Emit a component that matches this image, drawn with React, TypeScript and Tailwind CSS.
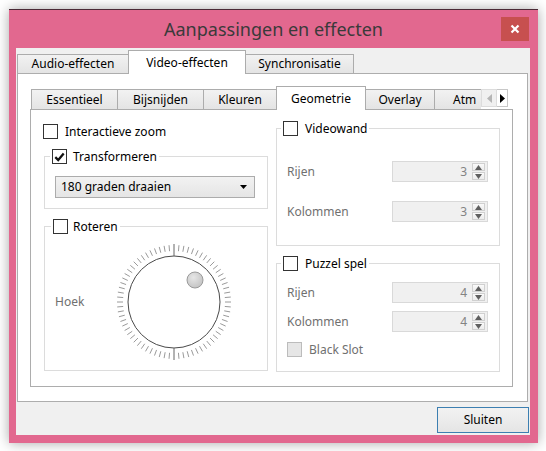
import React from 'react';

const Check = ({ checked = false, disabled = false }: { checked?: boolean; disabled?: boolean }) => (
  <span
    className={`flex h-[15px] w-[15px] shrink-0 items-center justify-center border ${
      disabled ? 'border-[#bcbcbc] bg-[#e6e6e6]' : 'border-[#333333] bg-white'
    }`}
  >
    {checked && (
      <svg width="11" height="10" viewBox="0 0 11 10">
        <path d="M1.3 5.2 L4.2 8 L9.7 1.6" fill="none" stroke="#111" strokeWidth="2.3" />
      </svg>
    )}
  </span>
);

const Spin = ({ value }: { value: number }) => (
  <div className="flex h-[21px] w-[96px] items-center justify-end border border-[#d9d9d9] bg-[#f0f0f0] pr-[2px]">
    <span className="mr-[5px] text-[#838383]">{value}</span>
    <div className="flex flex-col gap-px">
      <span className="flex h-[8px] w-[13px] items-center justify-center border border-[#d0d0d0] bg-gradient-to-b from-[#fafafa] to-[#ececec]">
        <svg width="7" height="5" viewBox="0 0 7 5">
          <path d="M0 5 L3.5 0 L7 5Z" fill="#5f5f5f" />
        </svg>
      </span>
      <span className="flex h-[8px] w-[13px] items-center justify-center border border-[#d0d0d0] bg-gradient-to-b from-[#fafafa] to-[#ececec]">
        <svg width="7" height="5" viewBox="0 0 7 5">
          <path d="M0 0 L3.5 5 L7 0Z" fill="#5f5f5f" />
        </svg>
      </span>
    </div>
  </div>
);

const Tab = ({ label, w, active = false, first = false, inner = false }: { label: string; w: string; active?: boolean; first?: boolean; inner?: boolean }) => (
  <div
    className={`${w} ${
      active
        ? 'relative z-10 -mb-px h-[24px] bg-white'
        : inner
        ? 'h-[20px] bg-gradient-to-b from-[#f2f2f2] to-[#e4e4e4]'
        : 'h-[19px] bg-gradient-to-b from-[#f2f2f2] to-[#e4e4e4]'
    } ${first ? '' : '-ml-px'} flex shrink-0 items-center justify-center border border-b-0 border-[#acacac] text-black`}
  >
    {label}
  </div>
);

const Dial = () => {
  const c = 62;
  const ticks = Array.from({ length: 72 }, (_, i) => {
    const a = (i * 5 * Math.PI) / 180;
    const long = i === 0 || i === 36;
    const r1 = long ? 46 : 51;
    const r2 = long ? 58 : 57;
    return (
      <line
        key={i}
        x1={c + r1 * Math.sin(a)}
        y1={c - r1 * Math.cos(a)}
        x2={c + r2 * Math.sin(a)}
        y2={c - r2 * Math.cos(a)}
        stroke={long ? '#666' : '#9a9a9a'}
        strokeWidth="1"
      />
    );
  });
  return (
    <svg width="124" height="124" viewBox="0 0 124 124">
      <defs>
        <radialGradient id="knob" cx="0.4" cy="0.35" r="0.7">
          <stop offset="0" stopColor="#e6e6e6" />
          <stop offset="1" stopColor="#c2c2c2" />
        </radialGradient>
      </defs>
      <circle cx={c} cy={c} r="46" fill="white" stroke="#4a4a4a" strokeWidth="1" />
      {ticks}
      <circle cx={83} cy={40} r="8" fill="url(#knob)" stroke="#9a9a9a" strokeWidth="1" />
    </svg>
  );
};

export default function App() {
  return (
    <div className="h-[451px] w-[546px] bg-white pl-[9px] pt-[9px] font-['Noto_Sans',sans-serif] text-[12px] leading-none">
      <div className="flex h-[434px] w-[529px] flex-col border-t border-[#4b2a36] bg-[#e2688f] shadow-[0_0_12px_rgba(0,0,0,0.35)]">
        {/* title bar */}
        <div className="relative flex h-[38px] shrink-0 items-center justify-center">
          <span className="text-[18px] text-[#3a3a3a]">Aanpassingen en effecten</span>
          <div className="absolute right-[9px] top-[7px] flex h-[24px] w-[28px] items-center justify-center bg-[#c7504f]">
            <svg width="10" height="10" viewBox="0 0 10 10">
              <path d="M1.5 1.5 L8.5 8.5 M8.5 1.5 L1.5 8.5" stroke="white" strokeWidth="2.2" />
            </svg>
          </div>
        </div>

        {/* client */}
        <div className="ml-[7px] flex h-[387px] w-[514px] flex-col bg-[#f0f0f0]">
          <div className="ml-[1px] mt-[2px] flex h-[23px] items-end">
            <Tab label="Audio-effecten" w="w-[112px]" first />
            <Tab label="Video-effecten" w="w-[118px]" active />
            <Tab label="Synchronisatie" w="w-[109px]" />
          </div>
          <div className="ml-[1px] h-[329px] w-[511px] border border-[#adadad] bg-white pl-[12px] pt-[12px]">
            {/* inner tabs */}
            <div className="ml-[1px] flex h-[23px] items-end">
              <Tab label="Essentieel" w="w-[87px]" first inner />
              <Tab label="Bijsnijden" w="w-[87px]" inner />
              <Tab label="Kleuren" w="w-[74px]" inner />
              <Tab label="Geometrie" w="w-[90px]" active inner />
              <Tab label="Overlay" w="w-[70px]" inner />
              <div className="-ml-px flex h-[20px] w-[47px] shrink-0 items-center border-l border-t border-[#acacac] bg-gradient-to-b from-[#f2f2f2] to-[#e4e4e4] pl-[18px]">
                <span>Atm</span>
              </div>
              <div className="mb-[2px] flex h-[18px] w-[16px] shrink-0 items-center justify-center border border-[#dcdcdc] bg-[#f0f0f0]">
                <svg width="5" height="9" viewBox="0 0 5 9">
                  <path d="M5 0 L0 4.5 L5 9Z" fill="#b5b5b5" />
                </svg>
              </div>
              <div className="mb-[2px] flex h-[18px] w-[11px] shrink-0 items-center justify-center border border-l-0 border-[#c8c8c8] bg-white">
                <svg width="5" height="9" viewBox="0 0 5 9">
                  <path d="M0 0 L5 4.5 L0 9Z" fill="#000" />
                </svg>
              </div>
            </div>
            <div className="flex h-[278px] w-[483px] gap-[8px] border border-[#adadad] bg-white px-[12px]">
              {/* left column */}
              <div className="flex w-[225px] flex-col pt-[14px]">
                <div className="flex h-[15px] items-center gap-[7px]">
                  <Check />
                  <span>Interactieve zoom</span>
                </div>
                <fieldset className="ml-[1px] mt-[10px] w-[224px] border border-[#dcdcdc] p-0">
                  <legend className="ml-[5px] flex h-[15px] items-center gap-[6px] px-[2px]">
                    <Check checked />
                    <span>Transformeren</span>
                  </legend>
                  <div className="pb-[10px] pl-[10px] pr-[12px] pt-[12px]">
                    <div className="flex h-[22px] items-center justify-between border border-[#acacac] bg-gradient-to-b from-[#f2f2f2] to-[#e5e5e5] pl-[5px] pr-[7px]">
                      <span>180 graden draaien</span>
                      <svg width="7" height="4" viewBox="0 0 7 4">
                        <path d="M0 0 L7 0 L3.5 4Z" fill="#000" />
                      </svg>
                    </div>
                  </div>
                </fieldset>
                <fieldset className="ml-[1px] mt-[10px] w-[224px] border border-[#dcdcdc] p-0">
                  <legend className="ml-[6px] flex h-[15px] items-center gap-[5px] px-[2px]">
                    <Check />
                    <span>Roteren</span>
                  </legend>
                  <div className="flex h-[136px] items-center pl-[10px]">
                    <span className="w-[57px] text-[#707070]">Hoek</span>
                    <Dial />
                  </div>
                </fieldset>
              </div>

              {/* right column */}
              <div className="flex w-[224px] flex-col pt-[11px]">
                <fieldset className="w-[224px] border border-[#dcdcdc] p-0">
                  <legend className="ml-[4px] flex h-[15px] items-center gap-[7px] px-[2px]">
                    <Check />
                    <span>Videowand</span>
                  </legend>
                  <div className="flex flex-col gap-[19px] pb-[23px] pt-[25px]">
                    <div className="flex items-center justify-between pl-[10px] pr-[11px]">
                      <span className="text-[#707070]">Rijen</span>
                      <Spin value={3} />
                    </div>
                    <div className="flex items-center justify-between pl-[10px] pr-[11px]">
                      <span className="text-[#707070]">Kolommen</span>
                      <Spin value={3} />
                    </div>
                  </div>
                </fieldset>
                <fieldset className="mt-[10px] w-[224px] border border-[#dcdcdc] p-0">
                  <legend className="ml-[4px] flex h-[15px] items-center gap-[7px] px-[2px]">
                    <Check />
                    <span>Puzzel spel</span>
                  </legend>
                  <div className="flex flex-col pb-[14px] pt-[11px]">
                    <div className="flex items-center justify-between pl-[10px] pr-[11px]">
                      <span className="text-[#707070]">Rijen</span>
                      <Spin value={4} />
                    </div>
                    <div className="mt-[8px] flex items-center justify-between pl-[10px] pr-[11px]">
                      <span className="text-[#707070]">Kolommen</span>
                      <Spin value={4} />
                    </div>
                    <div className="mt-[10px] flex h-[15px] items-center gap-[7px] pl-[10px]">
                      <Check disabled />
                      <span className="text-[#707070]">Black Slot</span>
                    </div>
                  </div>
                </fieldset>
              </div>
            </div>
          </div>
          <div className="mt-[5px] flex justify-end pr-[1px]">
            <button className="h-[26px] w-[92px] border border-[#3c7fb1] bg-gradient-to-b from-[#f2f2f2] to-[#e5e5e5] text-black">
              Sluiten
            </button>
          </div>
        </div>
      </div>
    </div>
  );
}
